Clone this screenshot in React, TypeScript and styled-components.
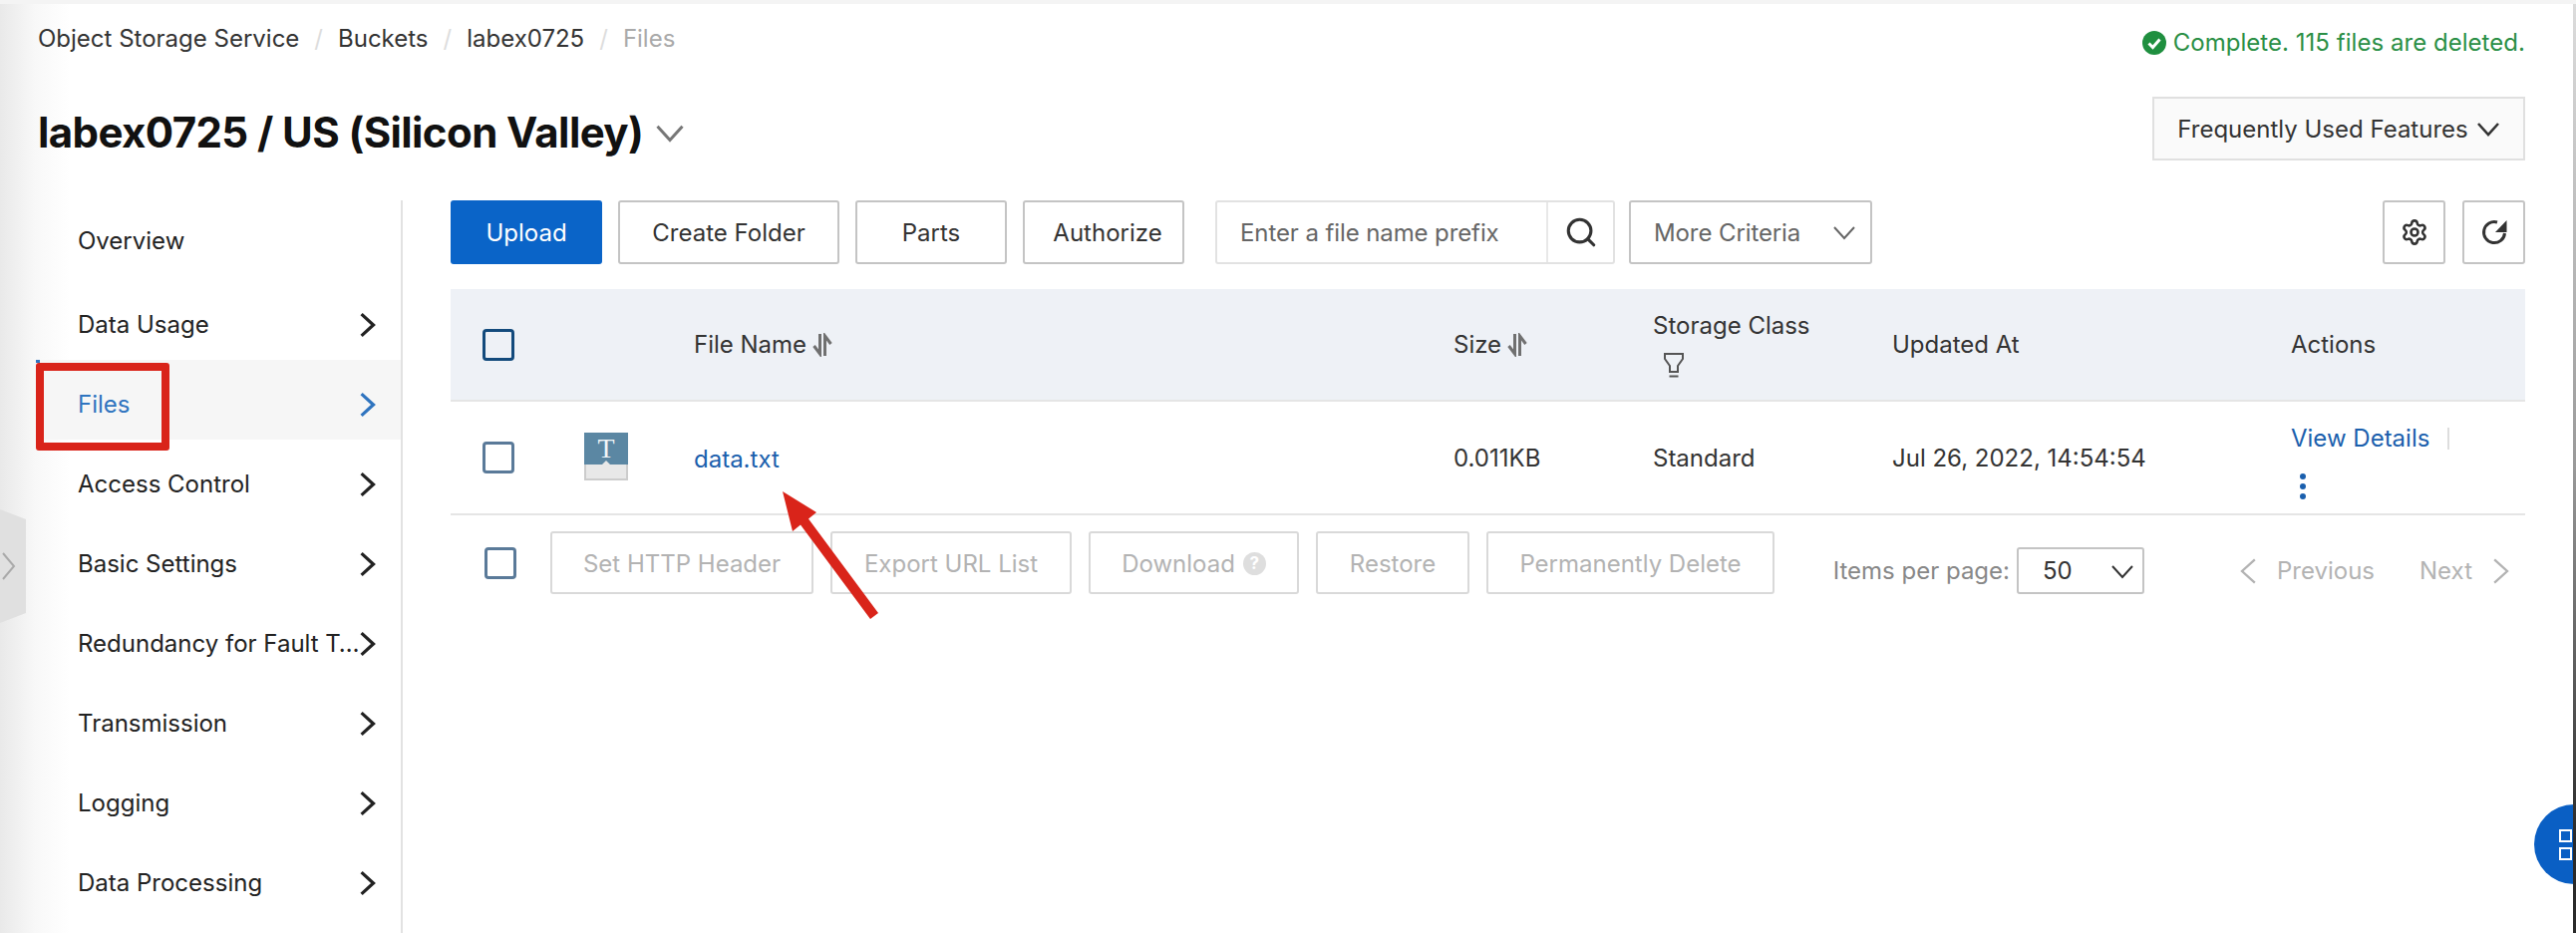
import { Settings, Search } from 'lucide-react';
import styled, { createGlobalStyle } from 'styled-components';

const navItems = ['Data Usage', 'Files', 'Access Control', 'Basic Settings', 'Redundancy for Fault T…', 'Transmission', 'Logging', 'Data Processing'];

const Chevron = ({ dir = 'right', size = 24, width = 3 }: { dir?: 'right' | 'left' | 'down'; size?: number; width?: number }) => {
  const d = dir === 'right' ? 'M7 2 L18 12 L7 22' : dir === 'left' ? 'M17 2 L6 12 L17 22' : 'M2 7 L12 18 L22 7';
  return (
    <svg width={size} height={size} viewBox="0 0 24 24" fill="none" stroke="currentColor" strokeWidth={width}>
      <path d={d} />
    </svg>
  );
};

const SortIcon = () => (
  <svg width="20" height="24" viewBox="0 0 20 24" fill="none" stroke="#707070" strokeWidth="3">
    <path d="M7.5 1 V21 L1.5 13" />
    <path d="M12.5 23 V3 L18.5 11" />
  </svg>
);

const App = () => {
  return (
    <Page>
      <GlobalStyle />
      <TopRow>
        <Breadcrumb>
          <span>Object Storage Service</span>
          <Slash>/</Slash>
          <span>Buckets</span>
          <Slash>/</Slash>
          <span>labex0725</span>
          <Slash>/</Slash>
          <Current>Files</Current>
        </Breadcrumb>
        <Notice>
          <svg width="24" height="24" viewBox="0 0 24 24">
            <circle cx="12" cy="12" r="12" fill="#1f8f3f" />
            <path d="M6.5 12.5 L10.5 16.5 L17.5 8.5" fill="none" stroke="#fff" strokeWidth="3" />
          </svg>
          Complete. 115 files are deleted.
        </Notice>
      </TopRow>

      <TitleRow>
        <TitleGroup>
          <Title>labex0725 / US (Silicon Valley)</Title>
          <TitleChevron>
            <Chevron dir="down" size={30} width={2.4} />
          </TitleChevron>
        </TitleGroup>
        <FeaturesButton>
          Frequently Used Features
          <Chevron dir="down" size={24} width={2.6} />
        </FeaturesButton>
      </TitleRow>

      <Body>
        <Sidebar>
          <NavItem $first>
            <NavLabel>Overview</NavLabel>
          </NavItem>
          {navItems.map((item) => (
            <NavItem key={item} $active={item === 'Files'}>
              <NavLabel>{item}</NavLabel>
              <Chevron size={26} width={3} />
            </NavItem>
          ))}
        </Sidebar>

        <Main>
          <Toolbar>
            <PrimaryButton>Upload</PrimaryButton>
            <ToolButton $w={222}>Create Folder</ToolButton>
            <ToolButton $w={152}>Parts</ToolButton>
            <ToolButton $w={162} $shift={8}>
              Authorize
            </ToolButton>
            <SearchBox>
              <SearchInput>Enter a file name prefix</SearchInput>
              <SearchAddon>
                <Search size={34} strokeWidth={2.2} />
              </SearchAddon>
            </SearchBox>
            <CriteriaSelect>
              More Criteria
              <Chevron dir="down" size={24} width={2} />
            </CriteriaSelect>
            <ToolSpacer />
            <IconGroup>
              <IconButton>
                <Settings size={28} strokeWidth={2.2} />
              </IconButton>
              <IconButton>
                <svg width="28" height="28" viewBox="0 0 28 28" fill="none">
                  <path d="M24.5 15 A10.5 10.5 0 1 1 17 4" stroke="#333" strokeWidth="3" />
                  <path d="M26.5 2 V14 H15 Z" fill="#333" />
                </svg>
              </IconButton>
            </IconGroup>
          </Toolbar>

          <HeaderRow>
            <Checkbox $tone="#134a7c" />
            <span />
            <HeadCell>
              File Name <SortIcon />
            </HeadCell>
            <HeadCell>
              Size <SortIcon />
            </HeadCell>
            <StorageHead>
              Storage Class
              <FilterIcon>
                <svg width="22" height="26" viewBox="0 0 22 26" fill="none" stroke="#555" strokeWidth="2">
                  <path d="M2 2 H20 V7 L15 14 V20 H7 V14 L2 7 Z" />
                  <path d="M6.5 24.5 H15.5" />
                </svg>
              </FilterIcon>
            </StorageHead>
            <HeadCell>Updated At</HeadCell>
            <HeadCell>Actions</HeadCell>
          </HeaderRow>

          <FileRow>
            <Checkbox $tone="#5a7a99" />
            <FileIcon>
              <FileIconTop>T</FileIconTop>
            </FileIcon>
            <NameLink>data.txt</NameLink>
            <span>0.011KB</span>
            <span>Standard</span>
            <span>Jul 26, 2022, 14:54:54</span>
            <ActionsCell>
              <ActionLine>
                <FileLink>View Details</FileLink>
                <ActionDivider />
              </ActionLine>
              <MoreDots>
                <i />
                <i />
                <i />
              </MoreDots>
            </ActionsCell>
          </FileRow>

          <BottomBar>
            <BulkCheck>
              <Checkbox $tone="#5a7a99" />
            </BulkCheck>
            <BulkButton $w={264}>Set HTTP Header</BulkButton>
            <BulkButton $w={242}>Export URL List</BulkButton>
            <BulkButton $w={211}>
              Download <HelpDot>?</HelpDot>
            </BulkButton>
            <BulkButton $w={154}>Restore</BulkButton>
            <BulkButton $w={289}>Permanently Delete</BulkButton>
            <Pager>
              <PerPage>Items per page:</PerPage>
              <PageSelect>
                50
                <Chevron dir="down" size={24} width={2} />
              </PageSelect>
              <PrevNext>
                <Chevron dir="left" size={28} width={2} />
                <span>Previous</span>
              </PrevNext>
              <PrevNext>
                <span>Next</span>
                <Chevron size={28} width={2} />
              </PrevNext>
            </Pager>
          </BottomBar>
        </Main>
      </Body>

      <CollapseHandle>
        <svg width="26" height="114" viewBox="0 0 26 114">
          <path d="M0 0 L26 10 V104 L0 114 Z" fill="#e0e0e0" />
          <path d="M3 44 L14 57 L3 70" fill="none" stroke="#aaa" strokeWidth="2" />
        </svg>
      </CollapseHandle>
      <Highlight />
      <Arrow width="120" height="150" viewBox="0 0 120 150">
        <path d="M5 3 L39 24 L31 30.5 L101 125 L93 131 L23 36.5 L15 43 Z" fill="#d9241a" />
      </Arrow>
      <FloatButton>
        <i />
        <i />
      </FloatButton>
      <EdgeLine />
    </Page>
  );
};

export default App;

const GlobalStyle = createGlobalStyle`
  html, body {
    margin: 0;
    padding: 0;
    background: #fff;
  }
  * {
    box-sizing: border-box;
  }
`;

const Page = styled.div`
  position: relative;
  width: 2584px;
  height: 936px;
  overflow: hidden;
  display: flex;
  flex-direction: column;
  padding: 0 51px 0 38px;
  border-top: 4px solid #f4f4f4;
  background: linear-gradient(90deg, #e9e9e9 0, #f8f8f8 35px, #fff 70px);
  font-family: Inter, 'Liberation Sans', sans-serif;
  font-size: 24px;
  color: #333;
`;

const TopRow = styled.div`
  height: 76px;
  display: flex;
  justify-content: space-between;
  align-items: flex-start;
`;

const Breadcrumb = styled.div`
  margin-top: 19px;
  display: flex;
  align-items: center;
  line-height: 32px;
`;

const Slash = styled.span`
  margin: 0 15px;
  color: #ddd;
`;

const Current = styled.span`
  color: #aaa;
`;

const Notice = styled.div`
  margin-top: 23px;
  display: flex;
  align-items: center;
  gap: 7px;
  line-height: 32px;
  letter-spacing: 0.04px;
  color: #2b8f46;
`;

const TitleRow = styled.div`
  height: 121px;
  display: flex;
  justify-content: space-between;
  align-items: flex-start;
`;

const TitleGroup = styled.div`
  margin-top: 30px;
  height: 46px;
  display: flex;
  align-items: center;
  gap: 12px;
`;

const Title = styled.h1`
  margin: 0;
  font-size: 42px;
  font-weight: 700;
  line-height: 46px;
  color: #111;
  letter-spacing: -0.6px;
`;

const TitleChevron = styled.span`
  display: flex;
  color: #777;
`;

const FeaturesButton = styled.div`
  margin-top: 17px;
  width: 374px;
  height: 64px;
  display: flex;
  align-items: center;
  justify-content: center;
  gap: 8px;
  background: #fafafa;
  border: 2px solid #e0e0e0;
  color: #333;
`;

const Body = styled.div`
  flex: 1;
  display: flex;
  min-height: 0;
`;

const Sidebar = styled.div`
  width: 366px;
  flex-shrink: 0;
  border-right: 2px solid #e2e2e2;
`;

const NavItem = styled.div<{ $active?: boolean; $first?: boolean }>`
  height: 80px;
  display: flex;
  align-items: center;
  justify-content: space-between;
  padding: ${(p) => (p.$first ? '0' : '8px')} 21px 0 40px;
  background: ${(p) => (p.$active ? '#f6f6f6' : 'transparent')};
  color: ${(p) => (p.$active ? '#2f74bf' : '#222')};

  svg {
    margin: 2px 0 0 -8px;
    flex-shrink: 0;
  }
`;

const NavLabel = styled.span`
  white-space: nowrap;
`;

const Main = styled.div`
  flex: 1;
  min-width: 0;
  padding-left: 48px;
`;

const Toolbar = styled.div`
  height: 64px;
  margin-bottom: 25px;
  display: flex;
  gap: 16px;
`;

const PrimaryButton = styled.div`
  width: 152px;
  display: flex;
  align-items: center;
  justify-content: center;
  border-radius: 3px;
  background: #0a64c8;
  color: #fff;
`;

const ToolButton = styled.div<{ $w: number; $shift?: number }>`
  width: ${(p) => p.$w}px;
  padding-left: ${(p) => p.$shift ?? 0}px;
  display: flex;
  align-items: center;
  justify-content: center;
  border: 2px solid #c4c4c4;
  border-radius: 3px;
  color: #333;
`;

const SearchBox = styled.div`
  width: 401px;
  margin-left: 15px;
  display: flex;
  border: 2px solid #e2e2e2;
  border-radius: 3px;
`;

const SearchInput = styled.div`
  flex: 1;
  padding-left: 23px;
  display: flex;
  align-items: center;
  letter-spacing: -0.1px;
  color: #666;
`;

const SearchAddon = styled.div`
  width: 67px;
  display: flex;
  align-items: center;
  justify-content: center;
  border-left: 2px solid #e8e8e8;
  color: #333;
`;

const CriteriaSelect = styled.div`
  width: 244px;
  margin-left: -2px;
  padding: 0 14px 0 23px;
  display: flex;
  align-items: center;
  justify-content: space-between;
  border: 2px solid #c4c4c4;
  border-radius: 3px;
  letter-spacing: -0.1px;
  color: #666;
`;

const ToolSpacer = styled.div`
  flex: 1;
`;

const IconGroup = styled.div`
  display: flex;
  gap: 17px;
`;

const IconButton = styled.div`
  width: 63px;
  display: flex;
  align-items: center;
  justify-content: center;
  border: 2px solid #c4c4c4;
  border-radius: 3px;
  color: #333;
`;

const columns = '133px 111px 762px 200px 240px 400px 235px';

const HeaderRow = styled.div`
  height: 113px;
  display: grid;
  grid-template-columns: ${columns};
  align-items: center;
  background: #eef1f6;
  border-bottom: 2px solid #e5e5e5;
`;

const FileRow = styled.div`
  height: 114px;
  display: grid;
  grid-template-columns: ${columns};
  align-items: center;
  border-bottom: 2px solid #e5e5e5;
  color: #333;
`;

const Checkbox = styled.span<{ $tone: string }>`
  display: block;
  width: 32px;
  height: 32px;
  margin-left: 32px;
  border: 3px solid ${(p) => p.$tone};
  border-radius: 4px;
`;

const HeadCell = styled.div`
  display: flex;
  align-items: center;
  gap: 6px;
  color: #333;
`;

const StorageHead = styled.div`
  display: flex;
  flex-direction: column;
  gap: 12px;
  color: #333;
`;

const FilterIcon = styled.span`
  display: flex;
  padding-left: 10px;
`;

const FileIcon = styled.div`
  width: 44px;
  height: 48px;
  margin-left: 1px;
  margin-top: -2px;
  background: #e8e8e8;
  border: 2px solid #ccc;
  border-top: 0;
`;

const FileIconTop = styled.div`
  position: relative;
  height: 32px;
  margin: 0 -2px;
  display: flex;
  align-items: center;
  justify-content: center;
  background: #5b87a3;
  color: #f2f6f8;
  font-family: 'Liberation Serif', serif;
  font-size: 28px;
  line-height: 32px;

  &::after {
    content: '';
    position: absolute;
    left: 50%;
    bottom: 0;
    margin-left: -4px;
    border: 4px solid transparent;
    border-top: 0;
    border-bottom-color: #e8e8e8;
  }
`;

const FileLink = styled.span`
  color: #1b5fad;
`;

const NameLink = styled(FileLink)`
  padding-top: 2px;
`;

const ActionsCell = styled.div`
  padding-top: 8px;
  display: flex;
  flex-direction: column;
  gap: 21px;
`;

const ActionLine = styled.div`
  display: flex;
  align-items: center;
  gap: 18px;
`;

const ActionDivider = styled.span`
  width: 2px;
  height: 22px;
  background: #ddd;
`;

const MoreDots = styled.div`
  margin-left: 9px;
  display: flex;
  flex-direction: column;
  gap: 4px;

  i {
    width: 6px;
    height: 6px;
    border-radius: 50%;
    background: #1b5fad;
  }
`;

const BottomBar = styled.div`
  padding-top: 16px;
  display: flex;
  gap: 17px;
  align-items: flex-start;
`;

const BulkCheck = styled.div`
  height: 63px;
  width: 83px;
  display: flex;
  align-items: center;

  span {
    margin-left: 34px;
  }
`;

const BulkButton = styled.div<{ $w: number }>`
  width: ${(p) => p.$w}px;
  height: 63px;
  padding-top: 1px;
  display: flex;
  align-items: center;
  justify-content: center;
  gap: 8px;
  border: 2px solid #d9d9d9;
  border-radius: 3px;
  color: #b3b3b3;
`;

const HelpDot = styled.span`
  width: 23px;
  height: 23px;
  display: flex;
  align-items: center;
  justify-content: center;
  border-radius: 50%;
  background: #dedede;
  color: #fff;
  font-size: 17px;
  font-weight: 700;
`;

const Pager = styled.div`
  margin-left: auto;
  margin-top: 16px;
  padding-right: 11px;
  display: flex;
  align-items: center;
  color: #999;
`;

const PerPage = styled.span`
  color: #888;
`;

const PageSelect = styled.div`
  width: 128px;
  height: 47px;
  margin: 0 46px 0 7px;
  padding: 0 8px 0 24px;
  display: flex;
  align-items: center;
  justify-content: space-between;
  border: 2px solid #c4c4c4;
  border-radius: 3px;
  color: #333;
`;

const PrevNext = styled.div`
  display: flex;
  align-items: center;
  gap: 14px;
  margin-left: 45px;
  color: #b3b3b3;
`;

const CollapseHandle = styled.div`
  position: absolute;
  left: 0;
  top: 507px;
  display: flex;
`;

const Highlight = styled.div`
  position: absolute;
  left: 36px;
  top: 360px;
  width: 134px;
  height: 88px;
  border: 8px solid #d9241a;
  border-radius: 3px;

  &::before {
    content: '';
    position: absolute;
    left: -8px;
    top: -11px;
    width: 4px;
    height: 3px;
    background: #2f74bf;
  }
`;

const Arrow = styled.svg`
  position: absolute;
  left: 780px;
  top: 486px;
`;

const EdgeLine = styled.div`
  position: absolute;
  top: 0;
  bottom: 0;
  right: 0;
  width: 3px;
  background: linear-gradient(180deg, #dcdcdc, #999 50%, #2a2a2a 90%);
`;

const FloatButton = styled.div`
  position: absolute;
  left: 2542px;
  top: 803px;
  width: 80px;
  height: 80px;
  padding: 25px 0 0 25px;
  display: flex;
  flex-direction: column;
  gap: 5px;
  border-radius: 50%;
  background: #0a5fc4;

  i {
    width: 13px;
    height: 13px;
    border: 2px solid #fff;
  }
`;
